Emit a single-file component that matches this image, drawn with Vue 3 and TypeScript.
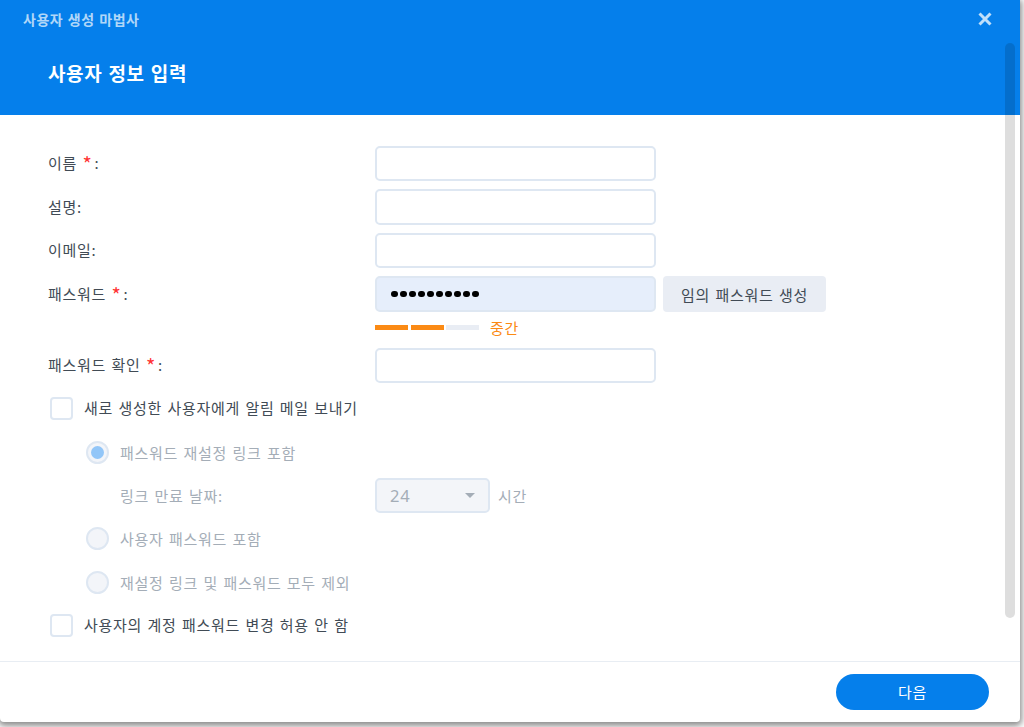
<script setup lang="ts">
const strength = [true, true, false]
</script>

<template>
  <div class="page">
    <div class="dialog">
      <header class="head">
        <div class="bar">
          <span class="wizard">사용자 생성 마법사</span>
          <svg class="close" width="16" height="16" viewBox="0 0 16 16" aria-label="닫기">
            <path d="M2.5 2.5 13.5 13.5M13.5 2.5 2.5 13.5" fill="none" stroke="currentColor" stroke-width="3" />
          </svg>
        </div>
        <h1 class="title">사용자 정보 입력</h1>
      </header>

      <main class="body">
        <div class="row">
          <label class="label">이름 <b class="req">*</b>:</label>
          <div class="input"></div>
        </div>
        <div class="row">
          <label class="label">설명:</label>
          <div class="input"></div>
        </div>
        <div class="row">
          <label class="label">이메일:</label>
          <div class="input"></div>
        </div>
        <div class="row">
          <label class="label">패스워드 <b class="req">*</b>:</label>
          <div class="input filled"><i v-for="n in 10" :key="n" class="dot"></i></div>
          <button class="gen">임의 패스워드 생성</button>
        </div>
        <div class="strength">
          <div class="meter">
            <i v-for="(on, i) in strength" :key="i" class="seg" :class="{ on }"></i>
          </div>
          <span class="level">중간</span>
        </div>
        <div class="row">
          <label class="label">패스워드 확인 <b class="req">*</b>:</label>
          <div class="input"></div>
        </div>

        <div class="check first">
          <span class="box"></span>
          <span class="dark">새로 생성한 사용자에게 알림 메일 보내기</span>
        </div>

        <div class="options">
          <div class="radio-row">
            <span class="radio checked"></span>
            <span>패스워드 재설정 링크 포함</span>
          </div>
          <div class="expire">
            <span class="expire-label">링크 만료 날짜:</span>
            <div class="select">
              <span>24</span>
              <i class="caret"></i>
            </div>
            <span class="unit">시간</span>
          </div>
          <div class="radio-row tight">
            <span class="radio"></span>
            <span>사용자 패스워드 포함</span>
          </div>
          <div class="radio-row">
            <span class="radio"></span>
            <span>재설정 링크 및 패스워드 모두 제외</span>
          </div>
        </div>

        <div class="check last">
          <span class="box"></span>
          <span class="dark">사용자의 계정 패스워드 변경 허용 안 함</span>
        </div>
      </main>

      <footer class="foot">
        <button class="next">다음</button>
      </footer>

      <div class="scroll"></div>
    </div>
  </div>
</template>

<style>
html, body { margin: 0; background: #fff; }
</style>

<style scoped>
.page {
  width: 1024px;
  height: 727px;
  overflow: hidden;
  font-family: "Noto Sans CJK KR", "Noto Sans", sans-serif;
  font-size: 15px;
  letter-spacing: 0.7px;
  word-spacing: 1.4px;
  color: #414b55;
}
.dialog {
  position: relative;
  width: 1020px;
  height: 722px;
  display: flex;
  flex-direction: column;
  background: #fff;
  border-radius: 0 0 4px 4px;
  box-shadow: 0 2px 6px 2px rgba(0, 0, 0, 0.45);
}
.head {
  height: 115px;
  flex: none;
  background: #057feb;
  color: #fff;
  display: flex;
  flex-direction: column;
}
.bar {
  height: 38px;
  display: flex;
  align-items: center;
  justify-content: space-between;
  padding: 0 27px 0 23px;
}
.wizard { font-weight: 700; font-size: 14px; line-height: 36px; color: rgba(255, 255, 255, 0.7); letter-spacing: 0.5px; word-spacing: 1px; }
.close { color: rgba(255, 255, 255, 0.75); }
.title { margin: 13px 0 0 48px; font-size: 19px; line-height: 44px; font-weight: 700; letter-spacing: 0.6px; word-spacing: 1.3px; }
.body { flex: 1; padding: 30.75px 0 0 48px; min-height: 0; }
.row { display: flex; align-items: center; height: 35.5px; margin-bottom: 8px; }
.label { width: 327px; flex: none; line-height: 33px; height: 35px; }
.req {
  color: #f33;
  font-weight: 400;
  font-size: 20px;
  line-height: 1;
  vertical-align: -3px;
  margin: 0 2px 0 0;
}
.input {
  width: 281px;
  height: 35.5px;
  box-sizing: border-box;
  border: 2px solid #dee7f2;
  border-radius: 5px;
  background: #fff;
}
.filled {
  background: #e6eefb;
  display: flex;
  align-items: center;
  gap: 2.5px;
  padding-left: 14px;
}
.dot { width: 6.5px; height: 6.5px; border-radius: 50%; background: #000; }
.gen {
  margin-left: 7px;
  width: 163px;
  height: 35.5px;
  border: 0;
  border-radius: 4px;
  background: #e9edf4;
  color: #414b55;
  font: inherit;
  letter-spacing: inherit;
  word-spacing: inherit;
}
.strength { display: flex; align-items: center; margin: -2px 0 10px 327px; height: 20px; }
.meter { display: flex; gap: 2.5px; width: 104px; }
.seg { flex: 1; height: 5px; background: #e9edf4; }
.seg.on { background: #fb8a14; }
.level { margin-left: 11px; color: #fb8a14; line-height: 20px; }
.check { display: flex; align-items: center; gap: 11px; height: 24px; margin-left: 2px; }
.check.first { margin-top: 13px; }
.check.last { margin-top: 19px; }
.dark { line-height: 24px; height: 24px; }
.box {
  width: 23px;
  height: 23px;
  box-sizing: border-box;
  border: 2px solid #dee7f2;
  border-radius: 4px;
}
.options { padding-left: 38px; color: #a4adb7; }
.radio-row { display: flex; align-items: center; gap: 11px; height: 24px; margin-top: 20px; }
.radio-row.tight { margin-top: 13px; }
.radio {
  width: 23px;
  height: 23px;
  box-sizing: border-box;
  border: 2px solid #dee7f2;
  border-radius: 50%;
  background: #f3f5f9;
  display: flex;
  align-items: center;
  justify-content: center;
}
.radio.checked::after {
  content: "";
  width: 13px;
  height: 13px;
  border-radius: 50%;
  background: #92c6f8;
}
.expire { display: flex; align-items: center; margin-top: 13px; height: 36px; }
.expire-label { width: 289px; padding-left: 34px; flex: none; box-sizing: border-box; }
.select {
  width: 115px;
  height: 35.5px;
  box-sizing: border-box;
  border: 2px solid #dee7f2;
  border-radius: 5px;
  background: #f3f5f9;
  display: flex;
  align-items: center;
  justify-content: space-between;
  padding: 0 13px 0 13px;
  font-family: "Noto Sans", sans-serif;
  font-size: 16.5px;
}
.caret {
  width: 0;
  height: 0;
  border: 5px solid transparent;
  border-top: 5px solid #a4adb7;
  border-bottom: 0;
}
.unit { margin-left: 8px; }
.foot {
  height: 61px;
  flex: none;
  box-sizing: border-box;
  border-top: 1.5px solid #e8edf3;
  display: flex;
  justify-content: flex-end;
  align-items: center;
  padding: 0 31px 0 0;
}
.next {
  width: 153px;
  height: 36px;
  border: 0;
  border-radius: 18px;
  background: #057feb;
  color: #fff;
  font: inherit;
  letter-spacing: inherit;
  margin-top: -1px;
}
.scroll {
  position: absolute;
  right: 5px;
  top: 43px;
  width: 10px;
  height: 575px;
  border-radius: 5px;
  background: rgba(0, 0, 0, 0.13);
}
</style>
